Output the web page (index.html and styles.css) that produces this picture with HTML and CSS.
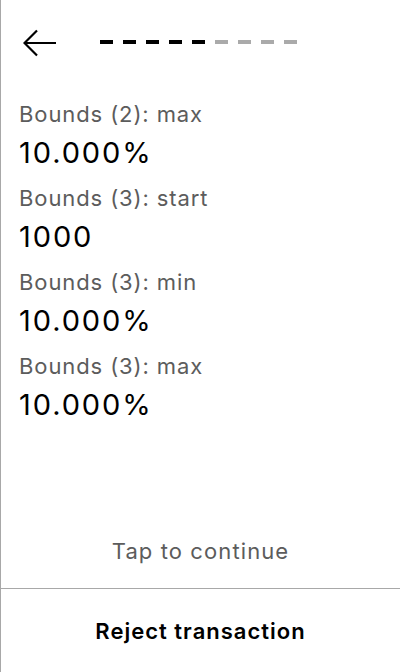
FILE: index.html
```html
<!DOCTYPE html>
<html>
<head>
<meta charset="utf-8">
<link rel="stylesheet" href="styles.css">
</head>
<body>
<div class="screen">
  <div class="header">
    <svg class="back" width="34" height="28" viewBox="0 0 34 28">
      <path d="M33 14H2M14 1.5L1.5 14L14 26.5" fill="none" stroke="#000" stroke-width="2.2"/>
    </svg>
    <div class="steps">
      <span class="dash on"></span><span class="dash on"></span><span class="dash on"></span><span class="dash on"></span><span class="dash on"></span><span class="dash"></span><span class="dash"></span><span class="dash"></span><span class="dash"></span>
    </div>
  </div>
  <div class="content">
    <div class="item"><div class="label">Bounds (2): max</div><div class="value">10.000%</div></div>
    <div class="item"><div class="label">Bounds (3): start</div><div class="value">1000</div></div>
    <div class="item"><div class="label">Bounds (3): min</div><div class="value">10.000%</div></div>
    <div class="item"><div class="label">Bounds (3): max</div><div class="value">10.000%</div></div>
  </div>
  <div class="tap">Tap to continue</div>
  <div class="reject">Reject transaction</div>
</div>
</body>
</html>
```
FILE: styles.css
```css
html, body {
  margin: 0;
  padding: 0;
  background: #fff;
}
body {
  font-family: Inter, "Noto Sans", sans-serif;
}
.screen {
  width: 400px;
  height: 672px;
  box-sizing: border-box;
  border-left: 1px solid #a8a8a8;
  display: flex;
  flex-direction: column;
}
.header {
  height: 86px;
  display: flex;
  align-items: center;
  padding-left: 22px;
  flex-shrink: 0;
}
.back {
  display: block;
}
.steps {
  display: flex;
  gap: 10px;
  margin-left: 43px;
  margin-bottom: 2px;
}
.dash {
  width: 13px;
  height: 4px;
  background: #aaaaaa;
}
.dash.on {
  background: #000;
}
.content {
  flex: 1;
  padding: 16px 0 0 18px;
  display: flex;
  flex-direction: column;
  gap: 17px;
}
.label {
  font-size: 22px;
  line-height: 24px;
  letter-spacing: 0.9px;
  color: #5c5c5c;
}
.value {
  font-size: 29px;
  line-height: 32px;
  letter-spacing: 1.9px;
  color: #000;
  margin-top: 11px;
}
.tap {
  font-size: 22px;
  line-height: 24px;
  letter-spacing: 1.1px;
  color: #5c5c5c;
  text-align: center;
  padding-bottom: 25px;
  border-bottom: 1px solid #a8a8a8;
}
.reject {
  height: 83px;
  display: flex;
  align-items: center;
  justify-content: center;
  font-size: 22px;
  font-weight: 600;
  letter-spacing: 1px;
  color: #000;
}
```
